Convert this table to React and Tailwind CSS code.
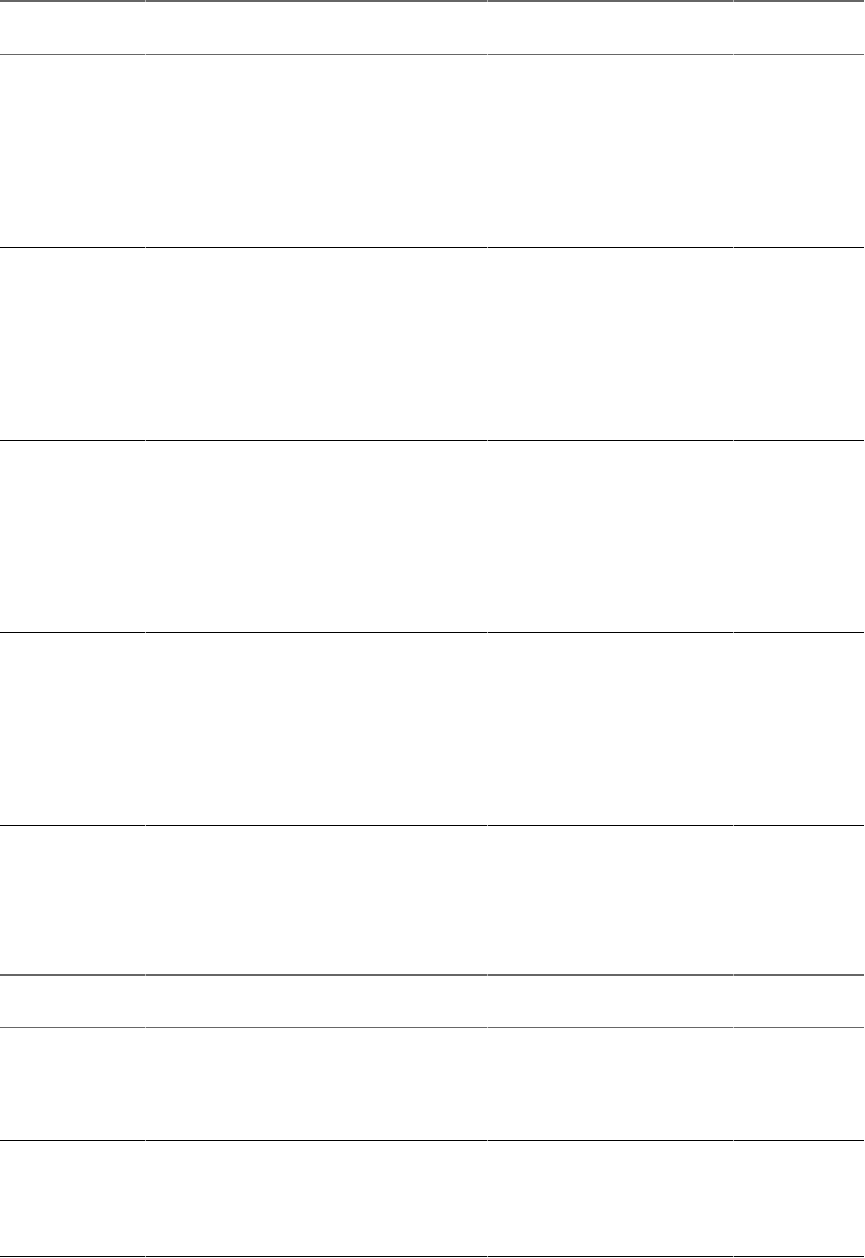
import React from "react";

const cols = "grid grid-cols-[145px_341px_245px_1fr] gap-x-px";

function Row({ h, cell, joint }) {
  return (
    <div className={cols}>
      {[0, 1, 2, 3].map((i) => (
        <div key={i} className={`relative ${h} ${cell} ${i > 0 ? joint : ""}`} />
      ))}
    </div>
  );
}

const headJoint =
  "before:absolute before:left-[-1px] before:top-[-2px] before:w-px before:h-[2px] before:bg-[#b4b4b4] after:absolute after:left-[-1px] after:bottom-[-1px] after:w-px after:h-px after:bg-[#c4c4c4]";
const bodyJoint =
  "after:absolute after:left-[-1px] after:bottom-[-1px] after:w-px after:h-px after:bg-[#a8a8a8]";

export default function App() {
  return (
    <div className="w-[864px] bg-white font-['Liberation_Sans',sans-serif]">
      <div className="flex flex-col">
        <Row h="h-[55px]" cell="border-t-2 border-b border-[#666666]" joint={headJoint} />
        <Row h="h-[193px]" cell="border-b border-black" joint={bodyJoint} />
        <Row h="h-[193px]" cell="border-b border-black" joint={bodyJoint} />
        <Row h="h-[192px]" cell="border-b border-black" joint={bodyJoint} />
        <Row h="h-[193px]" cell="border-b border-black" joint={bodyJoint} />
        <Row h="h-[148px]" cell="" joint="" />
      </div>
      <div className="flex flex-col">
        <Row h="h-[54px]" cell="border-t-2 border-b border-[#666666]" joint={headJoint} />
        <Row h="h-[113px]" cell="border-b border-black" joint={bodyJoint} />
        <Row h="h-[116px]" cell="border-b border-black" joint={bodyJoint} />
      </div>
    </div>
  );
}
